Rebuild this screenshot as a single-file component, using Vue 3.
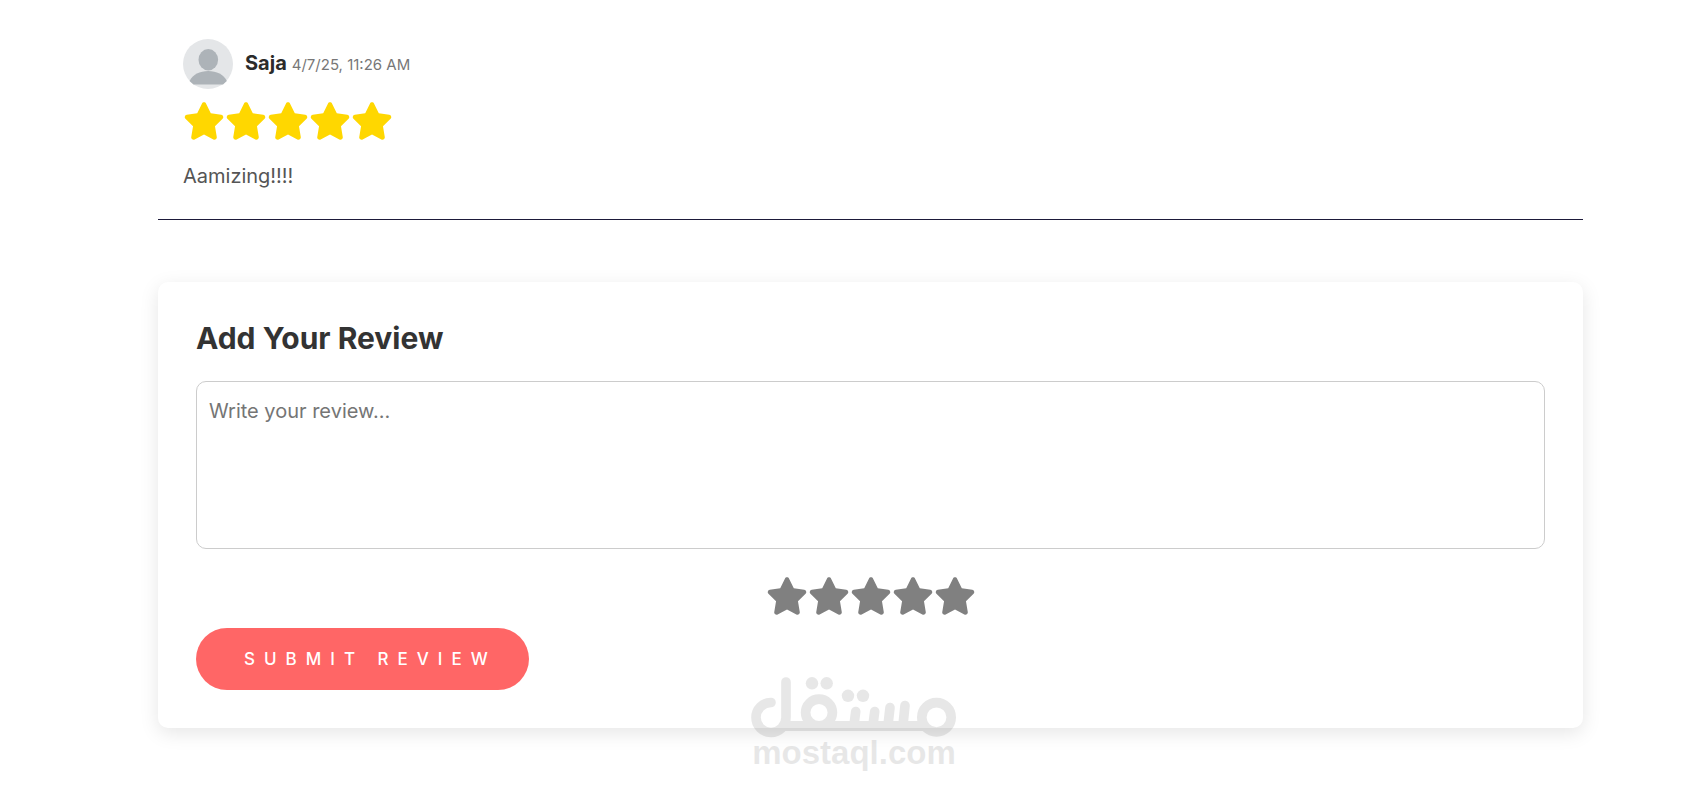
<script setup>
import { ref } from 'vue'

const starPath =
  'M316.9 18C311.6 7 300.4 0 288.1 0s-23.4 7-28.8 18L195 150.3 51.4 171.5c-12 1.8-22 10.2-25.7 21.7s-.7 24.2 7.9 32.7L137.8 329 113.2 474.7c-2 12 3 24.2 12.9 31.3s23 8 33.8 2.3l128.3-68.5 128.3 68.5c10.8 5.7 23.9 4.9 33.8-2.3s14.9-19.3 12.9-31.3L438.5 329 542.7 225.9c8.6-8.5 11.7-21.2 7.9-32.7s-13.7-19.9-25.7-21.7L381.2 150.3 316.9 18z'

const reviews = [
  { id: 1, name: 'Saja', date: '4/7/25, 11:26 AM', rating: 5, text: 'Aamizing!!!!' }
]

const draft = ref('')
const rating = ref(0)
</script>

<template>
  <main class="page">
    <article v-for="review in reviews" :key="review.id" class="review">
      <header class="author">
        <svg class="avatar" viewBox="0 0 50 50" aria-hidden="true">
          <circle cx="25" cy="25" r="25" fill="#e4e6e8" />
          <ellipse cx="25.3" cy="20.7" rx="9.8" ry="10.7" fill="#adb3b8" />
          <path d="M6.6 42C9.5 35.5 17 32 25.2 32S41 35.5 43.8 42L40 45.5H10.500z" fill="#adb3b8" />
        </svg>
        <p class="meta">
          <strong class="name">{{ review.name }}</strong>
          <time class="date">{{ review.date }}</time>
        </p>
      </header>
      <div class="stars" role="img" :aria-label="`${review.rating} / 5`">
        <svg v-for="n in 5" :key="n" class="star" :class="{ on: n <= review.rating }" viewBox="0 0 576 512">
          <path :d="starPath" />
        </svg>
      </div>
      <p class="comment">{{ review.text }}</p>
    </article>

    <form class="card" @submit.prevent>
      <h2 class="title"><label for="review-text">Add Your Review</label></h2>
      <textarea id="review-text" v-model="draft" class="field" placeholder="Write your review..."></textarea>
      <div class="stars picker" role="radiogroup">
        <label v-for="n in 5" :key="n" class="choice">
          <input v-model="rating" class="radio" type="radio" name="rating" :value="n" :aria-label="String(n)" />
          <svg class="star" :class="{ on: n <= rating }" viewBox="0 0 576 512" aria-hidden="true">
            <path :d="starPath" />
          </svg>
        </label>
      </div>
      <button class="submit" type="submit">SUBMIT REVIEW</button>
    </form>

    <div class="watermark">
      <svg class="mark" viewBox="20 15 208 62" fill="none" stroke="#000" role="img" aria-label="مستقل">
        <g stroke-width="9.600" stroke-linecap="round">
          <path d="M56 21V56.500A15 15 0 1 1 41 41.500" />
          <circle cx="89" cy="51.500" r="13.400" />
          <circle cx="206.500" cy="56.300" r="14.700" />
          <path d="M125.700 50.500L124 64M144.700 50.500L143 64M160 46.500L158 64M175 44.500L173 64" />
        </g>
        <path d="M54 65H194" stroke-width="10" />
        <g fill="#000" stroke="none">
          <circle cx="82" cy="22.300" r="6.200" />
          <circle cx="96.700" cy="22.300" r="6.200" />
          <circle cx="118" cy="34.800" r="6.200" />
          <circle cx="133" cy="34.800" r="6.200" />
        </g>
      </svg>
      <span class="domain">mostaql.com</span>
    </div>
  </main>
</template>

<style>
body {
  margin: 0;
  background: #fff;
}
</style>

<style scoped>
.page {
  position: relative;
  box-sizing: border-box;
  min-height: 100vh;
  padding: 14px 125px 32px 158px;
  font-family: Inter, 'Liberation Sans', sans-serif;
  color: #333;
}

.review {
  padding: 25px;
  border-bottom: 1px solid #1d1a3a;
}

.author {
  display: flex;
  align-items: center;
  gap: 12px;
}

.avatar {
  flex: none;
  width: 50px;
  height: 50px;
}

.meta {
  display: flex;
  align-items: baseline;
  gap: 5px;
  margin: 0;
  line-height: 32px;
}

.name {
  font-size: 20px;
  font-weight: 700;
  color: #2b2b2b;
}

.date {
  font-size: 15px;
  color: #777;
}

.stars {
  display: flex;
  margin-top: 13px;
}

.star {
  display: block;
  width: 42px;
  height: 38px;
  fill: #808080;
}

.star.on {
  fill: #ffd700;
}

.comment {
  margin: 19px 0 0;
  font-size: 20px;
  line-height: 35px;
  color: #555;
}

.card {
  margin-top: 62px;
  padding: 38px;
  border-radius: 10px;
  background: #fff;
  box-shadow: 0 5px 19px rgba(0, 0, 0, 0.1);
}

.title {
  margin: 0 0 25px;
  font-size: 30px;
  font-weight: 700;
  line-height: 36px;
}

.field {
  display: block;
  box-sizing: border-box;
  width: 100%;
  height: 168px;
  padding: 12px;
  border: 1px solid #ccc;
  border-radius: 10px;
  background: #fff;
  font-family: inherit;
  font-size: 20px;
  line-height: 34px;
  color: #333;
  resize: none;
}

.field::placeholder {
  color: #757575;
}

.picker {
  justify-content: center;
  margin: 28px 0 13px;
}

.choice {
  position: relative;
  cursor: pointer;
}

.radio {
  position: absolute;
  inset: 0;
  width: 100%;
  height: 100%;
  margin: 0;
  opacity: 0;
}

.submit {
  display: block;
  padding: 0 32px 0 48px;
  border: 0;
  border-radius: 31px;
  background: #f66;
  font-family: inherit;
  font-size: 17px;
  font-weight: 500;
  letter-spacing: 9px;
  line-height: 62px;
  color: #fff;
  cursor: pointer;
}

/* Site mark laid over the lower edge of the card */
.watermark {
  position: absolute;
  bottom: 18px;
  left: 50%;
  display: flex;
  flex-direction: column;
  align-items: center;
  width: 208px;
  margin-left: -104px;
  opacity: 0.09;
  pointer-events: none;
}

.mark {
  width: 208px;
  height: 62px;
}

.domain {
  font-family: 'Liberation Sans', Arial, sans-serif;
  font-size: 33px;
  font-weight: 700;
  line-height: 30px;
  color: #000;
}
</style>
